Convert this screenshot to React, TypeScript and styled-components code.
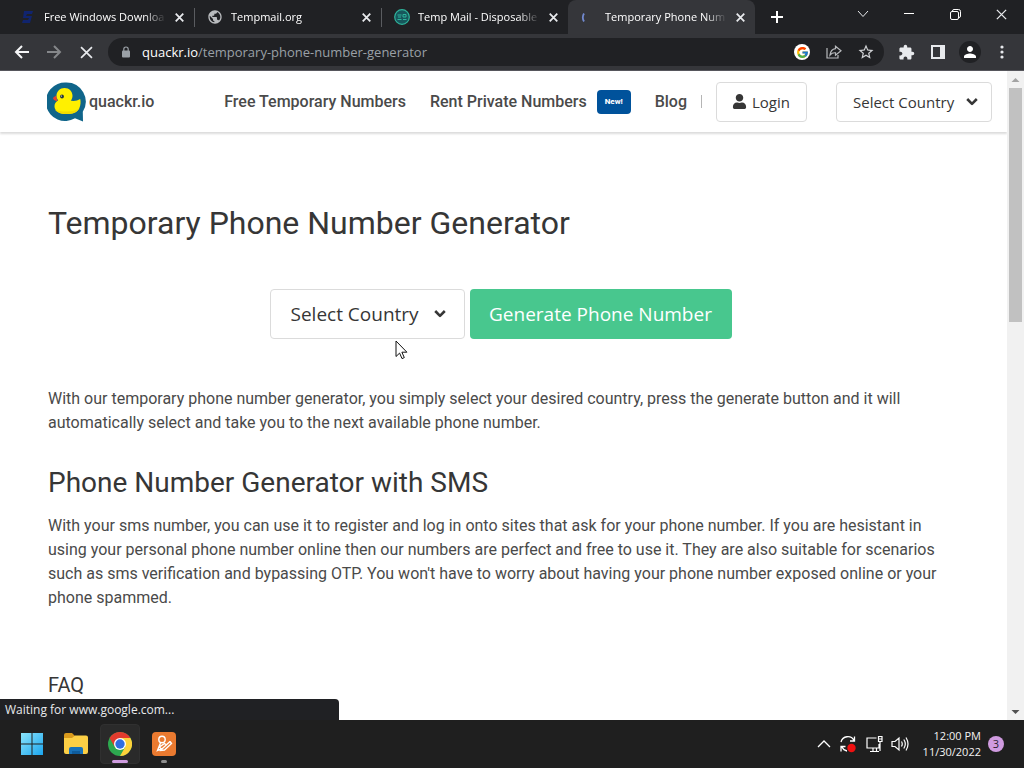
import React from "react";
import styled, { createGlobalStyle } from "styled-components";
import { MdPublic, MdLock, MdStarBorder, MdExtension, MdPerson } from "react-icons/md";
import { FaUser } from "react-icons/fa";
import { FcGoogle } from "react-icons/fc";

const uiFont = '"Open Sans", "Noto Sans", sans-serif';
const pageFont = 'Roboto, "Liberation Sans", sans-serif';

const GlobalStyle = createGlobalStyle`
  * { box-sizing: border-box; }
  body { margin: 0; background: #fff; font-family: ${pageFont}; color: #4a4a4a; overflow: hidden; }
  button, select { font: inherit; margin: 0; }
  svg { display: block; flex: none; }
`;

const Screen = styled.div`
  display: flex;
  flex-direction: column;
  height: 100vh;
`;

/* Browser frame */

const TabStrip = styled.div`
  display: flex;
  height: 34px;
  padding-left: 7px;
  background: #202124;
  font-family: ${uiFont};
`;

const Tab = styled.div<{ $active?: boolean; $divider?: boolean }>`
  position: relative;
  display: flex;
  align-items: center;
  gap: 8px;
  flex: 0 1 187px;
  min-width: 0;
  height: 34px;
  padding: 0 9px 0 13px;
  background: ${(p) => (p.$active ? "#35363a" : "transparent")};
  border-radius: 8px 8px 0 0;
  color: #e8eaed;

  &::after {
    content: "";
    display: ${(p) => (p.$divider ? "block" : "none")};
    position: absolute;
    right: -1px;
    top: 8px;
    width: 1px;
    height: 19px;
    background: #5a5c60;
  }
`;

const TabTitle = styled.span`
  flex: 1;
  min-width: 0;
  overflow: hidden;
  white-space: nowrap;
  font-size: 11px;
  line-height: 18px;
  color: #fff;
  mask-image: linear-gradient(to right, #000 calc(100% - 22px), transparent);
`;

const IconButton = styled.button<{ $w?: number; $h?: number }>`
  display: flex;
  align-items: center;
  justify-content: center;
  flex: none;
  width: ${(p) => p.$w ?? 32}px;
  height: ${(p) => p.$h ?? 28}px;
  padding: 0;
  border: 0;
  background: transparent;
  color: #e8eaed;
`;

const WindowControls = styled.div`
  display: flex;
  margin-left: auto;
`;

const Toolbar = styled.div`
  display: flex;
  align-items: center;
  gap: 6px;
  height: 37px;
  padding: 0 6px;
  background: #35363a;
  border-bottom: 1px solid #56565c;
`;

const ButtonGroup = styled.div`
  display: flex;
`;

const AddressBar = styled.div`
  display: flex;
  align-items: center;
  flex: 1;
  min-width: 0;
  height: 28px;
  padding: 0 2px 0 12px;
  border-radius: 14px;
  background: #202124;
  color: #9aa0a6;
`;

const Address = styled.div`
  flex: 1;
  min-width: 0;
  margin-left: 10px;
  overflow: hidden;
  white-space: nowrap;
  font-family: ${uiFont};
  font-size: 13px;
  line-height: 20px;

  b { font-weight: 400; color: #fff; }
`;

const GoogleBadge = styled.span`
  display: flex;
  align-items: center;
  justify-content: center;
  width: 16px;
  height: 16px;
  border-radius: 50%;
  background: #fff;
`;

const Avatar = styled.span`
  display: flex;
  align-items: center;
  justify-content: center;
  width: 22px;
  height: 22px;
  border-radius: 50%;
  background: #202124;
`;

const Viewport = styled.div`
  position: relative;
  display: flex;
  flex: 1;
  min-height: 0;
`;

const Page = styled.div`
  flex: 1;
  min-width: 0;
  overflow: hidden;
  background: #fff;
`;

const ScrollBar = styled.div`
  display: flex;
  flex-direction: column;
  justify-content: space-between;
  width: 17px;
  background: #f1f1f1;
`;

const ScrollThumb = styled.div`
  flex: 0 0 36%;
  margin: 0 2px auto;
  background: #c1c1c1;
`;

const StatusBubble = styled.div`
  position: absolute;
  left: 0;
  bottom: 0;
  width: 339px;
  height: 21px;
  padding: 0 5px;
  border-radius: 0 4px 0 0;
  background: #202124;
  color: #e8eaed;
  font: 12px/21px ${uiFont};
`;

const Pointer = styled.svg`
  position: absolute;
  left: 395px;
  top: 269px;
`;

/* Site */

const SiteHeader = styled.header`
  display: flex;
  align-items: center;
  height: 61px;
  padding: 0 15px 0 47px;
  box-shadow: 0 2px 2px rgba(10, 10, 10, 0.14);
`;

const Brand = styled.a`
  display: flex;
  align-items: center;
  gap: 2px;
  color: #4a4a4a;
  font-size: 16px;
  font-weight: 500;
  text-decoration: none;
`;

const Nav = styled.nav`
  display: flex;
  align-items: center;
  gap: 24px;
  margin-left: auto;
`;

const NavLink = styled.a`
  display: flex;
  align-items: center;
  gap: 10px;
  color: #4a4a4a;
  font-size: 16px;
  font-weight: 500;
  white-space: nowrap;
  text-decoration: none;
`;

const NewTag = styled.span`
  width: 34px;
  height: 24px;
  border-radius: 4px;
  background: #00529b;
  color: #fff;
  font: 800 8px/24px ${pageFont};
  text-align: center;
`;

const Divider = styled.span`
  width: 1px;
  height: 13px;
  margin: 0 14px;
  background: #b5b5b5;
`;

const LoginButton = styled.button`
  display: flex;
  align-items: center;
  gap: 5px;
  height: 40px;
  margin-right: 29px;
  padding: 0 16px 0 15px;
  border: 1px solid #dbdbdb;
  border-radius: 4px;
  background: #fff;
  color: #363636;
  font: 15px/24px ${uiFont};
`;

const Dropdown = styled.label<{ $large?: boolean }>`
  position: relative;
  width: ${(p) => (p.$large ? 195 : 156)}px;
  height: ${(p) => (p.$large ? 50 : 40)}px;

  select {
    appearance: none;
    width: 100%;
    height: 100%;
    padding: 0 ${(p) => (p.$large ? 20 : 16)}px;
    border: 1px solid #dbdbdb;
    border-radius: 4px;
    background: #fff;
    color: #363636;
    font-family: ${uiFont};
    font-size: ${(p) => (p.$large ? 19 : 15)}px;
  }

  svg {
    position: absolute;
    right: ${(p) => (p.$large ? 19 : 14)}px;
    top: calc(50% - 5px);
    pointer-events: none;
  }
`;

const Content = styled.main`
  padding: 67px 54px 0 48px;
`;

const Title = styled.h1`
  margin: 0;
  color: #363636;
  font-size: 32px;
  font-weight: 400;
  line-height: 48px;
`;

const GeneratorForm = styled.form`
  display: flex;
  justify-content: center;
  gap: 5px;
  margin: 42px 0 48px;
`;

const GenerateButton = styled.button`
  width: 262px;
  height: 50px;
  padding: 0;
  border: 0;
  border-radius: 4px;
  background: #48c78e;
  color: #fff;
  font: 19px/30px ${uiFont};
  white-space: nowrap;
`;

const Paragraph = styled.p`
  margin: 0;
  font-size: 16px;
  line-height: 24px;
`;

const Subtitle = styled.h2`
  margin: 30px 0 13px;
  color: #363636;
  font-size: 28px;
  font-weight: 400;
  line-height: 36px;
`;

const FaqTitle = styled.h3`
  margin: 60px 0 0;
  color: #363636;
  font-size: 20px;
  font-weight: 400;
  line-height: 30px;
`;

/* Taskbar */

const Taskbar = styled.footer`
  display: flex;
  align-items: center;
  justify-content: space-between;
  height: 48px;
  padding: 0 20px 0 12px;
  background: #1f1f1f;
  color: #f3f3f3;
  font-family: ${uiFont};
`;

const AppRow = styled.div`
  display: flex;
  gap: 4px;
`;

const AppButton = styled.button<{ $mark?: string; $markWidth?: number; $active?: boolean }>`
  position: relative;
  display: flex;
  align-items: center;
  justify-content: center;
  width: 40px;
  height: 40px;
  margin: 0;
  padding: 0;
  border: 1px solid ${(p) => (p.$active ? "#303030" : "transparent")};
  border-radius: 4px;
  background: ${(p) => (p.$active ? "#2a2a2a" : "transparent")};

  &::after {
    content: "";
    position: absolute;
    bottom: 0;
    width: ${(p) => p.$markWidth ?? 0}px;
    height: 3px;
    border-radius: 2px;
    background: ${(p) => p.$mark ?? "transparent"};
  }
`;

const Tray = styled.div`
  display: flex;
  align-items: center;
`;

const TrayIcons = styled.div`
  display: flex;
  align-items: center;
  gap: 8px;
  margin-right: 14px;
`;

const Clock = styled.time`
  font-size: 11px;
  line-height: 16px;
  text-align: right;
`;

const Count = styled.span`
  width: 16px;
  height: 16px;
  margin: 0 0 0 7px;
  border-radius: 50%;
  background: #d09be0;
  color: #2b1f30;
  font-size: 11px;
  line-height: 16px;
  text-align: center;
`;

const CloseIcon = ({ size = 9, weight = 2 }: { size?: number; weight?: number }) => (
  <svg width={size} height={size} viewBox="0 0 10 10" stroke="currentColor" strokeWidth={weight} fill="none">
    <path d="M.8.8l8.4 8.4M9.2.8L.8 9.2" />
  </svg>
);

const ArrowIcon = ({ forward }: { forward?: boolean }) => (
  <svg width="16" height="16" viewBox="0 0 16 16" fill="none" stroke={forward ? "#85878a" : "#f5f6f7"} strokeWidth="2">
    <path d={forward ? "M1 8h13M8 2l6 6-6 6" : "M15 8H2M8 2L2 8l6 6"} />
  </svg>
);

const Chevron = () => (
  <svg width="12" height="10" viewBox="0 0 12 10" fill="none" stroke="#363636" strokeWidth="2.6" strokeLinejoin="round">
    <path d="M1.2 2L6 6.8 10.8 2" />
  </svg>
);

const ScrollArrow = ({ down }: { down?: boolean }) => (
  <svg width="17" height="17" viewBox="0 0 17 17" fill={down ? "#505050" : "#a3a3a3"}>
    <path d={down ? "M4.5 7h8l-4 4z" : "M4.5 11h8l-4-4z"} />
  </svg>
);

const DuckLogo = () => (
  <svg width="40" height="40" viewBox="0 0 40 40" aria-hidden="true">
    <path d="M19.500.5a19.200 19.200 0 0 1 16.300 29.300L36 39.500l-8-3.200A19.300 19.300 0 1 1 19.500.5z" fill="#10658a" />
    <path d="M9 13.500l-3.200 2.600 1.200 2 3.500 1.400z" fill="#e5412d" />
    <path d="M17.500 6c4.800 0 8 3.500 8 7.700 0 2-.7 3.600-1.700 5.100 3.700.5 6.900-.2 9.400-1.800.7 2.500.5 6.500-1 9.500-2.500 4.500-7.200 5.500-13 5.500-7 0-11.700-3.300-11.700-7.800 0-2.600 1.500-4.500 3.700-5.900-1.200-1.300-1.700-2.900-1.700-4.600C9.500 9.500 13 6 17.500 6z" fill="#fff000" />
    <path d="M8 27.500c2 3.300 6 4.500 11.200 4.500 5.800 0 10.500-1 13-5.500-4 3-17 4.500-24.200 1z" fill="#f4dc00" />
    <circle cx="15" cy="14.500" r="1.900" fill="#24343c" />
    <circle cx="14.500" cy="14" r=".6" fill="#fff" />
  </svg>
);

const ChromeLogo = () => (
  <svg width="24" height="24" viewBox="0 0 24 24">
    <circle cx="12" cy="12" r="12" fill="#2da94f" />
    <path d="M12 6h10.400A12 12 0 0 1 12 24l5.200-9z" fill="#fdd23a" />
    <path d="M1.600 6A12 12 0 0 1 22.400 6H12v3L6.800 15z" fill="#e33b2e" />
    <circle cx="12" cy="12" r="6" fill="#fff" />
    <circle cx="12" cy="12" r="4.700" fill="#2f6de0" />
  </svg>
);

export default function App() {
  return (
    <Screen>
      <GlobalStyle />
      <TabStrip>
        <Tab $divider>
          <svg width="16" height="16" viewBox="0 0 16 16">
            <path d="M4 2h9l-1 3H7l-1 2h6l-2 7H2l1-3h5l1-2H3z" fill="#10246e" />
          </svg>
          <TabTitle>Free Windows Downloa</TabTitle>
          <IconButton $w={11} aria-label="Close tab"><CloseIcon /></IconButton>
        </Tab>
        <Tab $divider>
          <MdPublic size={16} color="#b9bbbe" />
          <TabTitle>Tempmail.org</TabTitle>
          <IconButton $w={11} aria-label="Close tab"><CloseIcon /></IconButton>
        </Tab>
        <Tab>
          <svg width="16" height="16" viewBox="0 0 16 16" fill="none" stroke="#2fb49c">
            <circle cx="8" cy="8" r="7.300" fill="#17575c" strokeWidth="1.200" />
            <path d="M3.500 6h4M4 8h3M3.500 10.500h4M9 5.500h3v2.500H9zM9 10.500h3.500" />
          </svg>
          <TabTitle>Temp Mail - Disposable</TabTitle>
          <IconButton $w={11} aria-label="Close tab"><CloseIcon /></IconButton>
        </Tab>
        <Tab $active>
          <svg width="16" height="16" viewBox="0 0 16 16" fill="none" stroke="#7189cf" strokeWidth="1.800">
            <path d="M3 4.500C1.500 7 1.500 10 3 12.500" />
          </svg>
          <TabTitle>Temporary Phone Num</TabTitle>
          <IconButton $w={11} aria-label="Close tab"><CloseIcon /></IconButton>
        </Tab>
        <IconButton $w={44} $h={34} aria-label="New tab">
          <svg width="12" height="12" viewBox="0 0 12 12" stroke="#fff" strokeWidth="2"><path d="M6 0v12M0 6h12" /></svg>
        </IconButton>
        <WindowControls>
          <IconButton $w={46} aria-label="Search tabs">
            <svg width="12" height="8" viewBox="0 0 12 8" fill="none" stroke="currentColor"><path d="M1 1l5 5.500L11 1" /></svg>
          </IconButton>
          <IconButton $w={46} aria-label="Minimize">
            <svg width="10" height="2" viewBox="0 0 10 2" stroke="#fff"><path d="M0 .5h10" /></svg>
          </IconButton>
          <IconButton $w={46} aria-label="Restore">
            <svg width="11" height="11" viewBox="0 0 11 11" fill="none" stroke="#fff">
              <rect x=".5" y="2.500" width="8" height="8" rx="1.500" />
              <path d="M2.500 2.500V2Q2.500.5 4 .5h4.500q2 0 2 2V7q0 1.500-1.500 1.500h-.5" />
            </svg>
          </IconButton>
          <IconButton $w={46} aria-label="Close"><CloseIcon size={11} weight={1.2} /></IconButton>
        </WindowControls>
      </TabStrip>

      <Toolbar>
        <ButtonGroup>
          <IconButton aria-label="Back"><ArrowIcon /></IconButton>
          <IconButton aria-label="Forward"><ArrowIcon forward /></IconButton>
          <IconButton aria-label="Stop loading"><CloseIcon size={13} weight={1.3} /></IconButton>
        </ButtonGroup>
        <AddressBar>
          <svg width="12" height="12" viewBox="0 0 12 12" fill="currentColor">
            <rect x="2" y="4.500" width="8" height="7" rx="1" />
            <path d="M3.800 5V3.200a2.200 2.200 0 0 1 4.400 0V5" fill="none" stroke="currentColor" strokeWidth="1.200" />
          </svg>
          <Address><b>quackr.io</b>/temporary-phone-number-generator</Address>
          <IconButton aria-label="Google"><GoogleBadge><FcGoogle size={13} /></GoogleBadge></IconButton>
          <IconButton aria-label="Share">
            <svg width="16" height="16" viewBox="0 0 16 16" fill="none" stroke="#b8babd" strokeWidth="1.200">
              <path d="M1 4v10h11v-3M9.500 2.200L15 6.800l-5.500 4.400V8.800C7 8.600 5.300 9.400 4 11c.4-3.400 2.200-6 5.500-6.400z" />
            </svg>
          </IconButton>
          <IconButton aria-label="Bookmark"><MdStarBorder size={18} color="#d0d2d5" /></IconButton>
        </AddressBar>
        <ButtonGroup>
          <IconButton aria-label="Extensions"><MdExtension size={17} /></IconButton>
          <IconButton aria-label="Side panel">
            <svg width="14" height="14" viewBox="0 0 14 14" fill="none" stroke="currentColor" strokeWidth="2">
              <path d="M1 1h12v12H1z" /><path d="M10 1h3v12h-3z" fill="currentColor" />
            </svg>
          </IconButton>
          <IconButton aria-label="Profile"><Avatar><MdPerson size={18} color="#fff" /></Avatar></IconButton>
          <IconButton aria-label="Menu">
            <svg width="4" height="14" viewBox="0 0 4 14" fill="currentColor">
              <circle cx="2" cy="2" r="1.600" /><circle cx="2" cy="7" r="1.600" /><circle cx="2" cy="12" r="1.600" />
            </svg>
          </IconButton>
        </ButtonGroup>
      </Toolbar>

      <Viewport>
        <Page>
          <SiteHeader>
            <Brand href="#"><DuckLogo />quackr.io</Brand>
            <Nav>
              <NavLink href="#">Free Temporary Numbers</NavLink>
              <NavLink href="#">Rent Private Numbers <NewTag>New!</NewTag></NavLink>
              <NavLink href="#">Blog</NavLink>
            </Nav>
            <Divider />
            <LoginButton type="button"><FaUser size={15} />Login</LoginButton>
            <Dropdown>
              <select aria-label="Country"><option>Select Country</option></select>
              <Chevron />
            </Dropdown>
          </SiteHeader>
          <Content>
            <Title>Temporary Phone Number Generator</Title>
            <GeneratorForm>
              <Dropdown $large>
                <select aria-label="Phone number country"><option>Select Country</option></select>
                <Chevron />
              </Dropdown>
              <GenerateButton type="button">Generate Phone Number</GenerateButton>
            </GeneratorForm>
            <Paragraph>
              With our temporary phone number generator, you simply select your desired country, press the generate
              button and it will automatically select and take you to the next available phone number.
            </Paragraph>
            <Subtitle>Phone Number Generator with SMS</Subtitle>
            <Paragraph>
              With your sms number, you can use it to register and log in onto sites that ask for your phone number. If
              you are hesistant in using your personal phone number online then our numbers are perfect and free to use
              it. They are also suitable for scenarios such as sms verification and bypassing OTP. You won't have to
              worry about having your phone number exposed online or your phone spammed.
            </Paragraph>
            <FaqTitle>FAQ</FaqTitle>
          </Content>
        </Page>
        <ScrollBar><ScrollArrow /><ScrollThumb /><ScrollArrow down /></ScrollBar>
        <Pointer width="13" height="20" viewBox="0 0 13 20" fill="#fff" stroke="#111" strokeWidth="1">
          <path d="M1 1v15.500l3.600-3.400 2.400 5.500 2.300-1-2.400-5.400h5z" />
        </Pointer>
        <StatusBubble>Waiting for www.google.com...</StatusBubble>
      </Viewport>

      <Taskbar>
        <AppRow>
          <AppButton aria-label="Start">
            <svg width="24" height="24" viewBox="0 0 24 24">
              <defs>
                <linearGradient id="win" x2="1" y2="1"><stop stopColor="#8be4fb" /><stop offset="1" stopColor="#1ba5ee" /></linearGradient>
              </defs>
              <path fill="url(#win)" d="M1 1h10.500v10.500H1zM12.500 1H23v10.500H12.500zM1 12.500h10.500V23H1zM12.500 12.500H23V23H12.500z" />
            </svg>
          </AppButton>
          <AppButton aria-label="File Explorer">
            <svg width="26" height="24" viewBox="0 0 26 24">
              <path d="M1 3q0-2 2-2h6l3 3v4H1z" fill="#d99a1c" />
              <path d="M1 6h8l3-2.500h11q2 0 2 2V20q0 2-2 2H3q-2 0-2-2z" fill="#fccf45" />
              <path d="M6 22v-5q0-2 2-2h10q2 0 2 2v5z" fill="#1872ba" />
              <path d="M9 22v-3h8v3z" fill="#0f5c9c" />
            </svg>
          </AppButton>
          <AppButton $active $mark="#cf9ce0" $markWidth={16} aria-label="Chrome"><ChromeLogo /></AppButton>
          <AppButton $mark="#8f8f8f" $markWidth={6} aria-label="Notes">
            <svg width="24" height="24" viewBox="0 0 24 24" fill="none" stroke="#fff" strokeWidth="1.400">
              <rect width="24" height="24" rx="4" fill="#ea7a30" stroke="none" />
              <circle cx="10" cy="7.500" r="3.200" />
              <path d="M8.500 11l-3 7.500 5-2 7.500-7M18 9.500l1.500 2-7 6.500-5 .5M10 18l-2.500-3 5-3.500 1.500 1" />
            </svg>
          </AppButton>
        </AppRow>
        <Tray>
          <TrayIcons>
            <svg width="14" height="8" viewBox="0 0 14 8" fill="none" stroke="#fff" strokeWidth="1.300"><path d="M1 7l6-6 6 6" /></svg>
            <svg width="18" height="18" viewBox="0 0 18 18" fill="none" stroke="#fff" strokeWidth="1.300">
              <path d="M2 7a7 7 0 0 1 13-1.500M15.500 1.500v4.500H11M8 16a7 7 0 0 1-5-4M2 16.500v-5h4.500" />
              <circle cx="12.500" cy="13" r="4.200" fill="#f01010" stroke="none" />
            </svg>
            <svg width="18" height="18" viewBox="0 0 18 18" fill="none" stroke="#fff" strokeWidth="1.200">
              <path d="M11.500 3H2v10h12V9M5 16.500h9M8 13v3M11.500 13v3M13.500 1.500h3.500v5h-3.500zM15 6.500V16M13.500 4H17" />
            </svg>
            <svg width="18" height="18" viewBox="0 0 18 18" fill="none" stroke="#fff" strokeWidth="1.200">
              <path d="M1 6.500h3L8 3v12l-4-3.500H1zM10.500 6.500q1.500 2.500 0 5M12.800 4.500q3 4.500 0 9M15 2.500q4 6.500 0 13" />
            </svg>
          </TrayIcons>
          <Clock>12:00 PM<br />11/30/2022</Clock>
          <Count>3</Count>
        </Tray>
      </Taskbar>
    </Screen>
  );
}
